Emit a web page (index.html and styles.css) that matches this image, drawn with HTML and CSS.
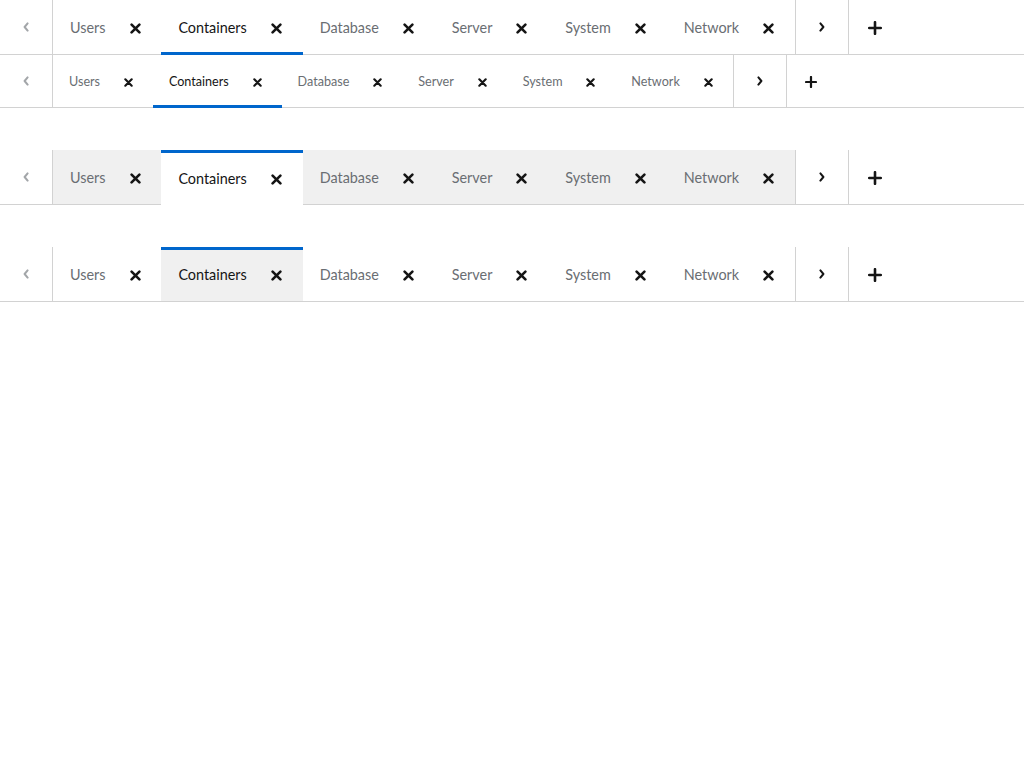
FILE: index.html
```html
<!DOCTYPE html>
<html>
<head>
<meta charset="utf-8">
<link rel="stylesheet" href="styles.css">
</head>
<body>
<svg width="0" height="0" class="defs">
  <defs>
    <symbol id="i-close" viewBox="0 0 11 11"><path d="M1.6 1.6 L9.4 9.4 M9.4 1.6 L1.6 9.4" stroke="currentColor" stroke-width="2.6" stroke-linecap="round" fill="none"/></symbol>
    <symbol id="i-plus" viewBox="0 0 14 14"><path d="M7 1.2 V12.8 M1.2 7 H12.8" stroke="currentColor" stroke-width="2.6" stroke-linecap="round" fill="none"/></symbol>
    <symbol id="i-left" viewBox="0 0 6 10"><path d="M4.6 1.4 L1.6 5 L4.6 8.6" stroke="currentColor" stroke-width="2" stroke-linecap="round" stroke-linejoin="round" fill="none"/></symbol>
    <symbol id="i-right" viewBox="0 0 6 10"><path d="M1.4 1.4 L4.4 5 L1.4 8.6" stroke="currentColor" stroke-width="2" stroke-linecap="round" stroke-linejoin="round" fill="none"/></symbol>
  </defs>
</svg>

<div class="tabs">
  <button class="scroll scroll-left" disabled><svg class="chev"><use href="#i-left"/></svg></button>
  <ul class="tab-list">
    <li class="tab"><span class="tab-link">Users</span><span class="close"><svg><use href="#i-close"/></svg></span></li>
    <li class="tab current"><span class="tab-link">Containers</span><span class="close"><svg><use href="#i-close"/></svg></span></li>
    <li class="tab"><span class="tab-link">Database</span><span class="close"><svg><use href="#i-close"/></svg></span></li>
    <li class="tab"><span class="tab-link">Server</span><span class="close"><svg><use href="#i-close"/></svg></span></li>
    <li class="tab"><span class="tab-link">System</span><span class="close"><svg><use href="#i-close"/></svg></span></li>
    <li class="tab"><span class="tab-link">Network</span><span class="close"><svg><use href="#i-close"/></svg></span></li>
  </ul>
  <button class="scroll scroll-right"><svg class="chev"><use href="#i-right"/></svg></button>
  <button class="add"><svg class="plus"><use href="#i-plus"/></svg></button>
</div>

<div class="tabs small">
  <button class="scroll scroll-left" disabled><svg class="chev"><use href="#i-left"/></svg></button>
  <ul class="tab-list">
    <li class="tab"><span class="tab-link">Users</span><span class="close"><svg><use href="#i-close"/></svg></span></li>
    <li class="tab current"><span class="tab-link">Containers</span><span class="close"><svg><use href="#i-close"/></svg></span></li>
    <li class="tab"><span class="tab-link">Database</span><span class="close"><svg><use href="#i-close"/></svg></span></li>
    <li class="tab"><span class="tab-link">Server</span><span class="close"><svg><use href="#i-close"/></svg></span></li>
    <li class="tab"><span class="tab-link">System</span><span class="close"><svg><use href="#i-close"/></svg></span></li>
    <li class="tab"><span class="tab-link">Network</span><span class="close"><svg><use href="#i-close"/></svg></span></li>
  </ul>
  <button class="scroll scroll-right"><svg class="chev"><use href="#i-right"/></svg></button>
  <button class="add"><svg class="plus"><use href="#i-plus"/></svg></button>
</div>

<div class="tabs box spaced">
  <button class="scroll scroll-left" disabled><svg class="chev"><use href="#i-left"/></svg></button>
  <ul class="tab-list">
    <li class="tab"><span class="tab-link">Users</span><span class="close"><svg><use href="#i-close"/></svg></span></li>
    <li class="tab current"><span class="tab-link">Containers</span><span class="close"><svg><use href="#i-close"/></svg></span></li>
    <li class="tab"><span class="tab-link">Database</span><span class="close"><svg><use href="#i-close"/></svg></span></li>
    <li class="tab"><span class="tab-link">Server</span><span class="close"><svg><use href="#i-close"/></svg></span></li>
    <li class="tab"><span class="tab-link">System</span><span class="close"><svg><use href="#i-close"/></svg></span></li>
    <li class="tab"><span class="tab-link">Network</span><span class="close"><svg><use href="#i-close"/></svg></span></li>
  </ul>
  <button class="scroll scroll-right"><svg class="chev"><use href="#i-right"/></svg></button>
  <button class="add"><svg class="plus"><use href="#i-plus"/></svg></button>
</div>

<div class="tabs box-light spaced">
  <button class="scroll scroll-left" disabled><svg class="chev"><use href="#i-left"/></svg></button>
  <ul class="tab-list">
    <li class="tab"><span class="tab-link">Users</span><span class="close"><svg><use href="#i-close"/></svg></span></li>
    <li class="tab current"><span class="tab-link">Containers</span><span class="close"><svg><use href="#i-close"/></svg></span></li>
    <li class="tab"><span class="tab-link">Database</span><span class="close"><svg><use href="#i-close"/></svg></span></li>
    <li class="tab"><span class="tab-link">Server</span><span class="close"><svg><use href="#i-close"/></svg></span></li>
    <li class="tab"><span class="tab-link">System</span><span class="close"><svg><use href="#i-close"/></svg></span></li>
    <li class="tab"><span class="tab-link">Network</span><span class="close"><svg><use href="#i-close"/></svg></span></li>
  </ul>
  <button class="scroll scroll-right"><svg class="chev"><use href="#i-right"/></svg></button>
  <button class="add"><svg class="plus"><use href="#i-plus"/></svg></button>
</div>
</body>
</html>
```

FILE: styles.css
```css
* { box-sizing: border-box; }
html, body { margin: 0; padding: 0; background: #fff; }
body { font-family: "Lato", "Liberation Sans", sans-serif; color: #151515; }
.defs { position: absolute; width: 0; height: 0; overflow: hidden; }

.tabs {
  display: flex;
  align-items: stretch;
  height: 55px;
  border-bottom: 1px solid #d2d2d2;
  font-size: 14.4px;
}
.tabs.small { height: 53px; font-size: 12.6px; }
.tabs.spaced { margin-top: 42px; }

button {
  font: inherit;
  background: transparent;
  border: 0;
  padding: 0;
  margin: 0;
  display: flex;
  align-items: center;
  justify-content: center;
  color: #151515;
}

.scroll { width: 53px; }
.scroll-left { border-right: 1px solid #d2d2d2; color: #a3a6a9; }
.scroll-right { width: 54px; border-left: 1px solid #d2d2d2; border-right: 1px solid #d2d2d2; }
.chev { width: 6px; height: 10px; margin-top: -1px; }

.add { width: 52px; }
.small .add { width: 48px; }
.plus { width: 14px; height: 14px; margin-top: 1px; }
.small .plus { width: 12px; height: 12px; }

.tab-list {
  display: flex;
  list-style: none;
  margin: 0;
  padding: 0;
}

.tab {
  position: relative;
  display: flex;
  align-items: center;
  color: #6a6e73;
}
.tab.current { color: #151515; }

.tab-link { padding: 2px 16px 0 17px; line-height: 24px; }
.small .tab-link { padding: 2px 16px 0 16px; }

.close {
  display: flex;
  align-items: center;
  padding: 2px 20.9px 0 8px;
  color: #151515;
}
.small .close { padding-right: 19.85px; }
.close svg { width: 11px; height: 11px; margin-top: 1px; }
.small .close svg { width: 9px; height: 9px; }

/* default: bottom indicator */
.tab.current::after {
  content: "";
  position: absolute;
  left: 0;
  right: 0;
  bottom: -1px;
  height: 3px;
  background: #0066cc;
}

/* box variant */
.box .tab { background: #f0f0f0; }
.box .tab.current {
  background: #fff;
  margin-bottom: -1px;
}
.box .tab.current::after,
.box-light .tab.current::after {
  top: 0;
  bottom: auto;
}
.box-light .tab.current { background: #f0f0f0; }
```
